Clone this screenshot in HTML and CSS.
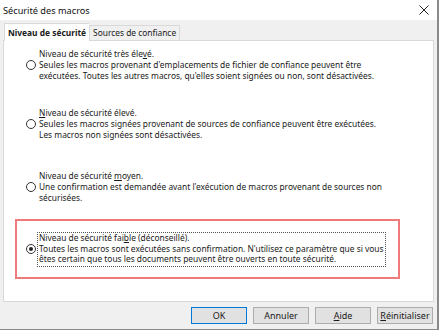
FILE: index.html
```html
<!DOCTYPE html>
<html lang="fr">
<head>
    <meta charset="utf-8">
    <title>Sécurité des macros</title>
    <link rel="stylesheet" href="styles.css">
</head>
<body>
    <div class="window">
        <div class="titlebar">
            <span class="title">Sécurité des macros</span>
            <svg class="close" width="10" height="10" viewBox="0 0 10 10">
                <path d="M0.5 0.5 L9.5 9.5 M9.5 0.5 L0.5 9.5" stroke="#222" stroke-width="1" fill="none"/>
            </svg>
        </div>

        <div class="client">
            <div class="tabs">
                <div class="tab active">Niveau de sécurité</div>
                <div class="tab">Sources de confiance</div>
            </div>

            <div class="panel">
                <div class="option opt-1">
                    <div class="label">Niveau de sécurité très éle<u>v</u>é.</div>
                    <span class="radio"></span>
                    <div class="desc">Seules les macros provenant d'emplacements de fichier de confiance peuvent être<br>exécutées. Toutes les autres macros, qu'elles soient signées ou non, sont désactivées.</div>
                </div>

                <div class="option opt-2">
                    <div class="label"><u>N</u>iveau de sécurité élevé.</div>
                    <span class="radio"></span>
                    <div class="desc">Seules les macros signées provenant de sources de confiance peuvent être exécutées.<br>Les macros non signées sont désactivées.</div>
                </div>

                <div class="option opt-3">
                    <div class="label">Niveau de sécurité <u>m</u>oyen.</div>
                    <span class="radio"></span>
                    <div class="desc">Une confirmation est demandée avant l'exécution de macros provenant de sources non<br>sécurisées.</div>
                </div>

                <div class="highlight">
                    <div class="option selected">
                        <span class="radio checked"></span>
                        <div class="focus">
                            Niveau de sécurité fai<u>b</u>le (déconseillé).<br>Toutes les macros sont exécutées sans confirmation. N'utilisez ce paramètre que si vous<br>êtes certain que tous les documents peuvent être ouverts en toute sécurité.
                        </div>
                    </div>
                </div>
            </div>

            <div class="buttons">
                <button class="btn default">OK</button>
                <button class="btn">Annuler</button>
                <button class="btn"><u>A</u>ide</button>
                <button class="btn"><u>R</u>éinitialiser</button>
            </div>
        </div>
    </div>
</body>
</html>
```

FILE: styles.css
```css
* {
    margin: 0;
    padding: 0;
    box-sizing: border-box;
}

body {
    width: 441px;
    height: 331px;
    background: #ffffff;
    font-family: 'Noto Sans', 'Open Sans', sans-serif;
    font-size: 8.4px;
    color: #1a1a1a;
    overflow: hidden;
}

.window {
    width: 439px;
    height: 330px;
    border-right: 2px solid #8a8a8a;
    border-bottom: 1px solid #8a8a8a;
    display: flex;
    flex-direction: column;
}

.titlebar {
    height: 20px;
    background: #ffffff;
    display: flex;
    align-items: center;
    justify-content: space-between;
    padding: 0 8px 0 3px;
}

.title {
    font-size: 9.2px;
    color: #111;
}

.client {
    flex: 1;
    background: #f0f0f0;
    padding: 3px 3px 0 3px;
    display: flex;
    flex-direction: column;
}

.tabs {
    display: flex;
    align-items: flex-end;
    height: 17px;
    padding-left: 1px;
}

.tab {
    height: 15px;
    padding: 0 3px;
    line-height: 14px;
    border: 1px solid #d9d9d9;
    border-bottom: none;
    background: #f0f0f0;
    color: #1a1a1a;
}

.tab.active {
    height: 18px;
    margin-bottom: -1px;
    padding: 0 3px;
    line-height: 17px;
    background: #ffffff;
    font-weight: bold;
    border-right: none;
    position: relative;
}

.panel {
    height: 262px;
    width: 431px;
    background: #ffffff;
    border: 1px solid #d9d9d9;
    padding-top: 7px;
}

.option {
    display: grid;
    grid-template-columns: 10px auto;
    column-gap: 1px;
    line-height: 11px;
    padding-left: 22px;
    align-items: start;
}

.option .label,
.option .desc {
    grid-column: 2;
    padding-left: 2px;
    white-space: nowrap;
}

.option .radio {
    grid-column: 1;
    grid-row: 2;
    margin-top: 1px;
}

.opt-2 {
    margin-top: 26px;
}

.opt-3 {
    margin-top: 30px;
}

.radio {
    width: 10px;
    height: 10px;
    border: 1px solid #333;
    border-radius: 50%;
    background: #fff;
    display: flex;
    align-items: center;
    justify-content: center;
}

.radio.checked::after {
    content: "";
    width: 4px;
    height: 4px;
    border-radius: 50%;
    background: #222;
}

.highlight {
    margin: 16px 0 0 11px;
    width: 385px;
    height: 60px;
    border: 2px solid #f07a7a;
    padding-top: 11px;
}

.option.selected {
    padding-left: 9px;
    align-items: center;
}

.option.selected .radio {
    grid-row: 1;
    margin-top: 0;
}

.focus {
    width: 349px;
    border: 1px dotted #555;
    padding: 0 0 1px 1px;
    white-space: nowrap;
    line-height: 10.5px;
}

u {
    text-decoration: underline;
}

.buttons {
    display: flex;
    justify-content: flex-end;
    gap: 6px;
    padding: 5px 1px 0 0;
}

.btn {
    width: 56px;
    height: 17px;
    background: #e1e1e1;
    border: 1px solid #adadad;
    font-family: 'Noto Sans', 'Open Sans', sans-serif;
    font-size: 9px;
    color: #1a1a1a;
}

.btn.default {
    border: 1px solid #0078d7;
}
```
